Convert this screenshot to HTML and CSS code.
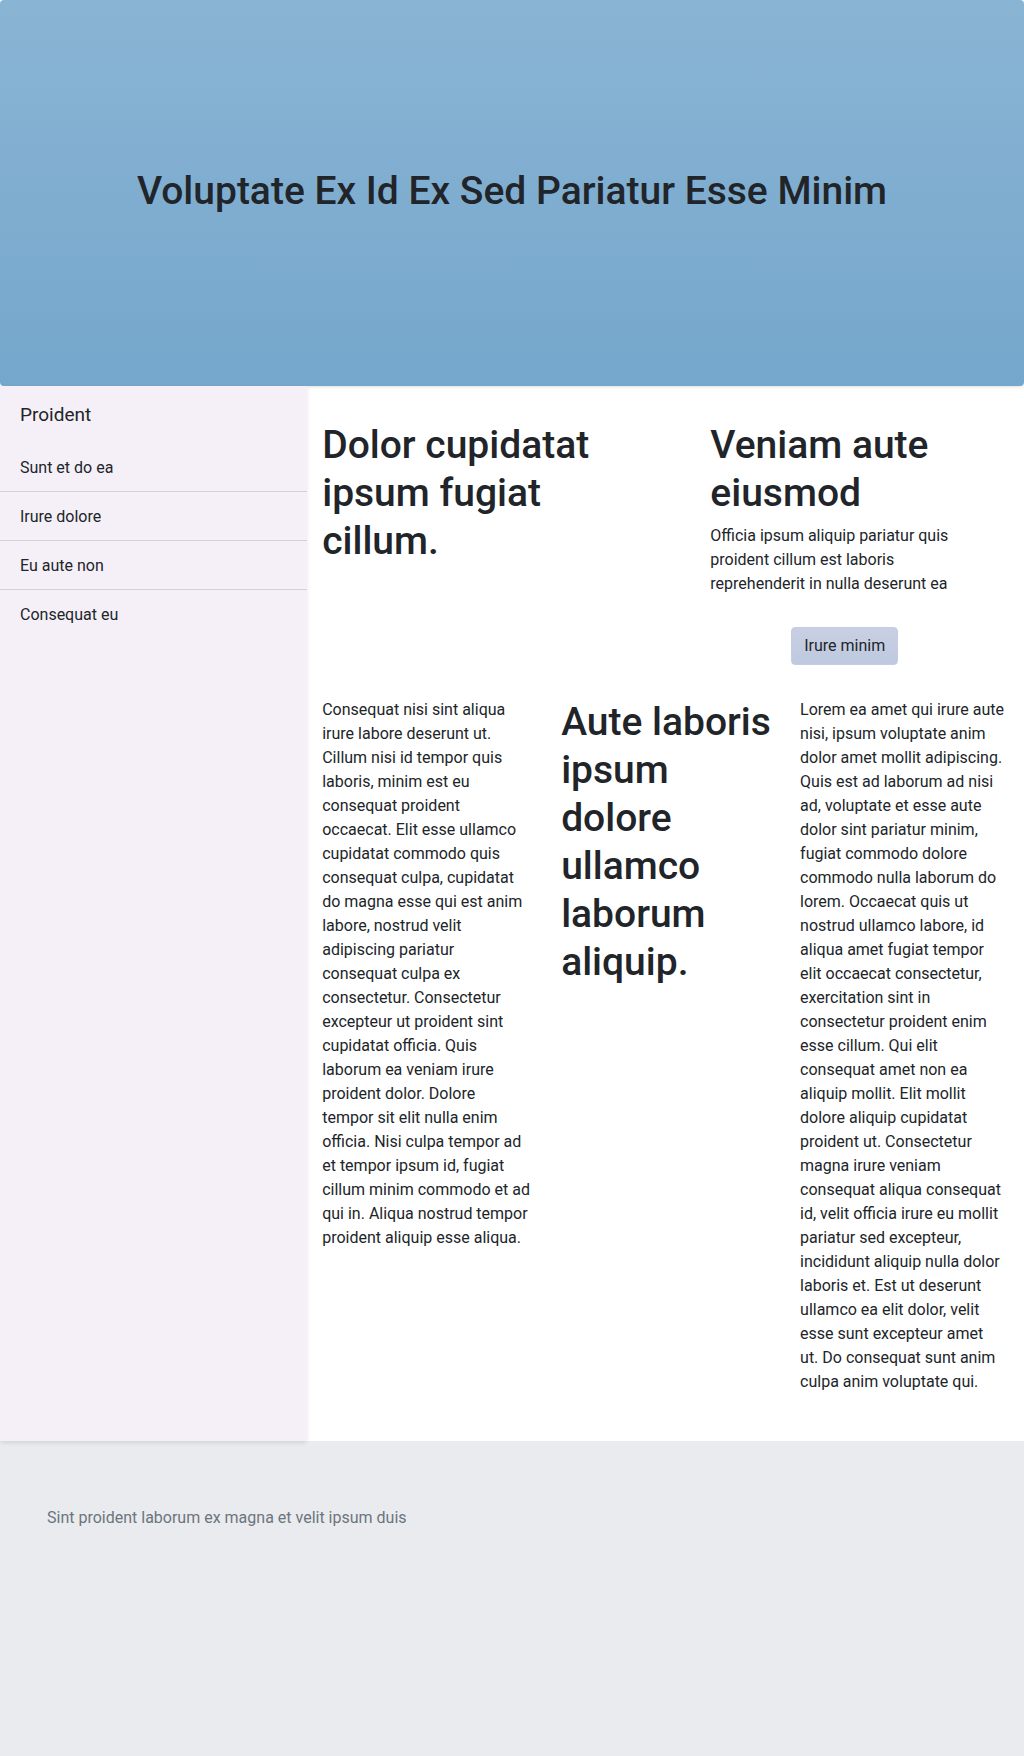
FILE: index.html
```html
<!DOCTYPE html>
<html lang="la">
<head>
<meta charset="utf-8">
<meta name="viewport" content="width=device-width, initial-scale=1">
<title>Voluptate Ex Id Ex Sed Pariatur Esse Minim</title>
<link rel="stylesheet" href="styles.css">
</head>
<body>
<header class="hero">
  <h1 class="heading">Voluptate Ex Id Ex Sed Pariatur Esse Minim</h1>
</header>
<div class="layout">
  <aside class="sidebar">
    <h2 class="sidebar-title">Proident</h2>
    <ul class="sidebar-list">
      <li>Sunt et do ea</li>
      <li>Irure dolore</li>
      <li>Eu aute non</li>
      <li>Consequat eu</li>
    </ul>
  </aside>
  <main class="content">
    <section class="intro">
      <div class="intro-lead"><h2 class="heading">Dolor cupidatat ipsum fugiat cillum.</h2></div>
      <div class="intro-col">
        <h2 class="heading">Veniam aute eiusmod</h2>
        <p class="text intro-text">Officia ipsum aliquip pariatur quis proident cillum est laboris reprehenderit in nulla deserunt ea</p>
        <button class="button" type="button">Irure minim</button>
      </div>
    </section>
    <section class="columns">
      <p class="text">Consequat nisi sint aliqua irure labore deserunt ut. Cillum nisi id tempor quis laboris, minim est eu consequat proident occaecat. Elit esse ullamco cupidatat commodo quis consequat culpa, cupidatat do magna esse qui est anim labore, nostrud velit adipiscing pariatur consequat culpa ex consectetur. Consectetur excepteur ut proident sint cupidatat officia. Quis laborum ea veniam irure proident dolor. Dolore<br> tempor sit elit nulla enim officia. Nisi culpa tempor ad et tempor ipsum id, fugiat cillum minim commodo et ad qui in. Aliqua nostrud tempor proident aliquip esse aliqua.</p>
      <h2 class="heading">Aute laboris ipsum dolore ullamco laborum aliquip.</h2>
      <p class="text">Lorem ea amet qui irure aute nisi, ipsum voluptate anim dolor amet mollit adipiscing. Quis est ad laborum ad nisi ad, voluptate et esse aute dolor sint pariatur minim, fugiat commodo dolore commodo nulla laborum do lorem. Occaecat quis ut nostrud ullamco labore, id aliqua amet fugiat tempor<br> elit occaecat consectetur, exercitation sint in consectetur proident enim esse cillum. Qui elit consequat amet non ea aliquip mollit. Elit mollit dolore aliquip cupidatat proident ut. Consectetur magna irure veniam consequat aliqua consequat id, velit officia irure eu mollit pariatur sed excepteur, incididunt aliquip nulla dolor laboris et. Est ut deserunt ullamco ea elit dolor, velit esse sunt excepteur amet ut.&nbsp;Do consequat sunt anim culpa anim voluptate qui.</p>
    </section>
  </main>
</div>
<footer class="footer">
  <p class="text">Sint proident laborum ex magna et velit ipsum duis</p>
</footer>
</body>
</html>
```
FILE: styles.css
```css
* { box-sizing: border-box; }

body {
  display: flex;
  flex-direction: column;
  min-height: 100vh;
  margin: 0;
  background: #fff;
  color: #212529;
  font: 16px/24px Roboto, "Liberation Sans", sans-serif;
}

.heading {
  margin: 0;
  font-size: 39px;
  line-height: 48px;
  font-weight: 500;
}

.text { margin: 0; }

.hero {
  display: flex;
  align-items: center;
  justify-content: center;
  min-height: 386px;
  padding: 24px 24px 28px;
  border-radius: 4px;
  background: linear-gradient(#8ab4d4, #75a7cc);
  box-shadow: 0 1px 3px rgba(0, 0, 0, 0.12);
  text-align: center;
}

.layout {
  display: grid;
  grid-template-columns: 3fr 7fr;
}

.sidebar {
  position: relative;
  border-radius: 0 0 4px 4px;
  background: #f5f0f8;
  box-shadow: 0 2px 4px rgba(0, 0, 0, 0.1);
}

.sidebar-title {
  margin: 0;
  padding: 17px 20px 16px;
  font-size: 19px;
  line-height: 24px;
  font-weight: 400;
}

.sidebar-list {
  margin: 0;
  padding: 0;
  list-style: none;
}

.sidebar-list li { padding: 13px 20px 11px; }
.sidebar-list li + li { border-top: 1px solid #d5cfda; }

.content { padding: 35px 0 47px; }

.intro {
  display: flex;
  justify-content: space-between;
  padding-right: 30px;
}

.intro-lead {
  width: 50%;
  padding: 0 15px;
}

.intro-col {
  display: flex;
  flex-direction: column;
  width: calc(5 / 12 * (100% + 30px));
  padding: 0 15px;
}

.intro-text { margin: 7px 0 31px; }

.button {
  align-self: center;
  height: 38px;
  padding: 0 12px;
  border: 1px solid #c5cde2;
  border-radius: 4px;
  background: linear-gradient(#c9cfe3, #bec9df);
  color: inherit;
  font: inherit;
}

.columns {
  display: grid;
  grid-template-columns: repeat(3, minmax(0, 1fr));
  margin-top: 33px;
}

.columns > * { padding: 0 14px 0 15px; }

.footer {
  flex: 1;
  padding: 65px 47px;
  background: #eaebef;
  color: #6c757d;
}
```
